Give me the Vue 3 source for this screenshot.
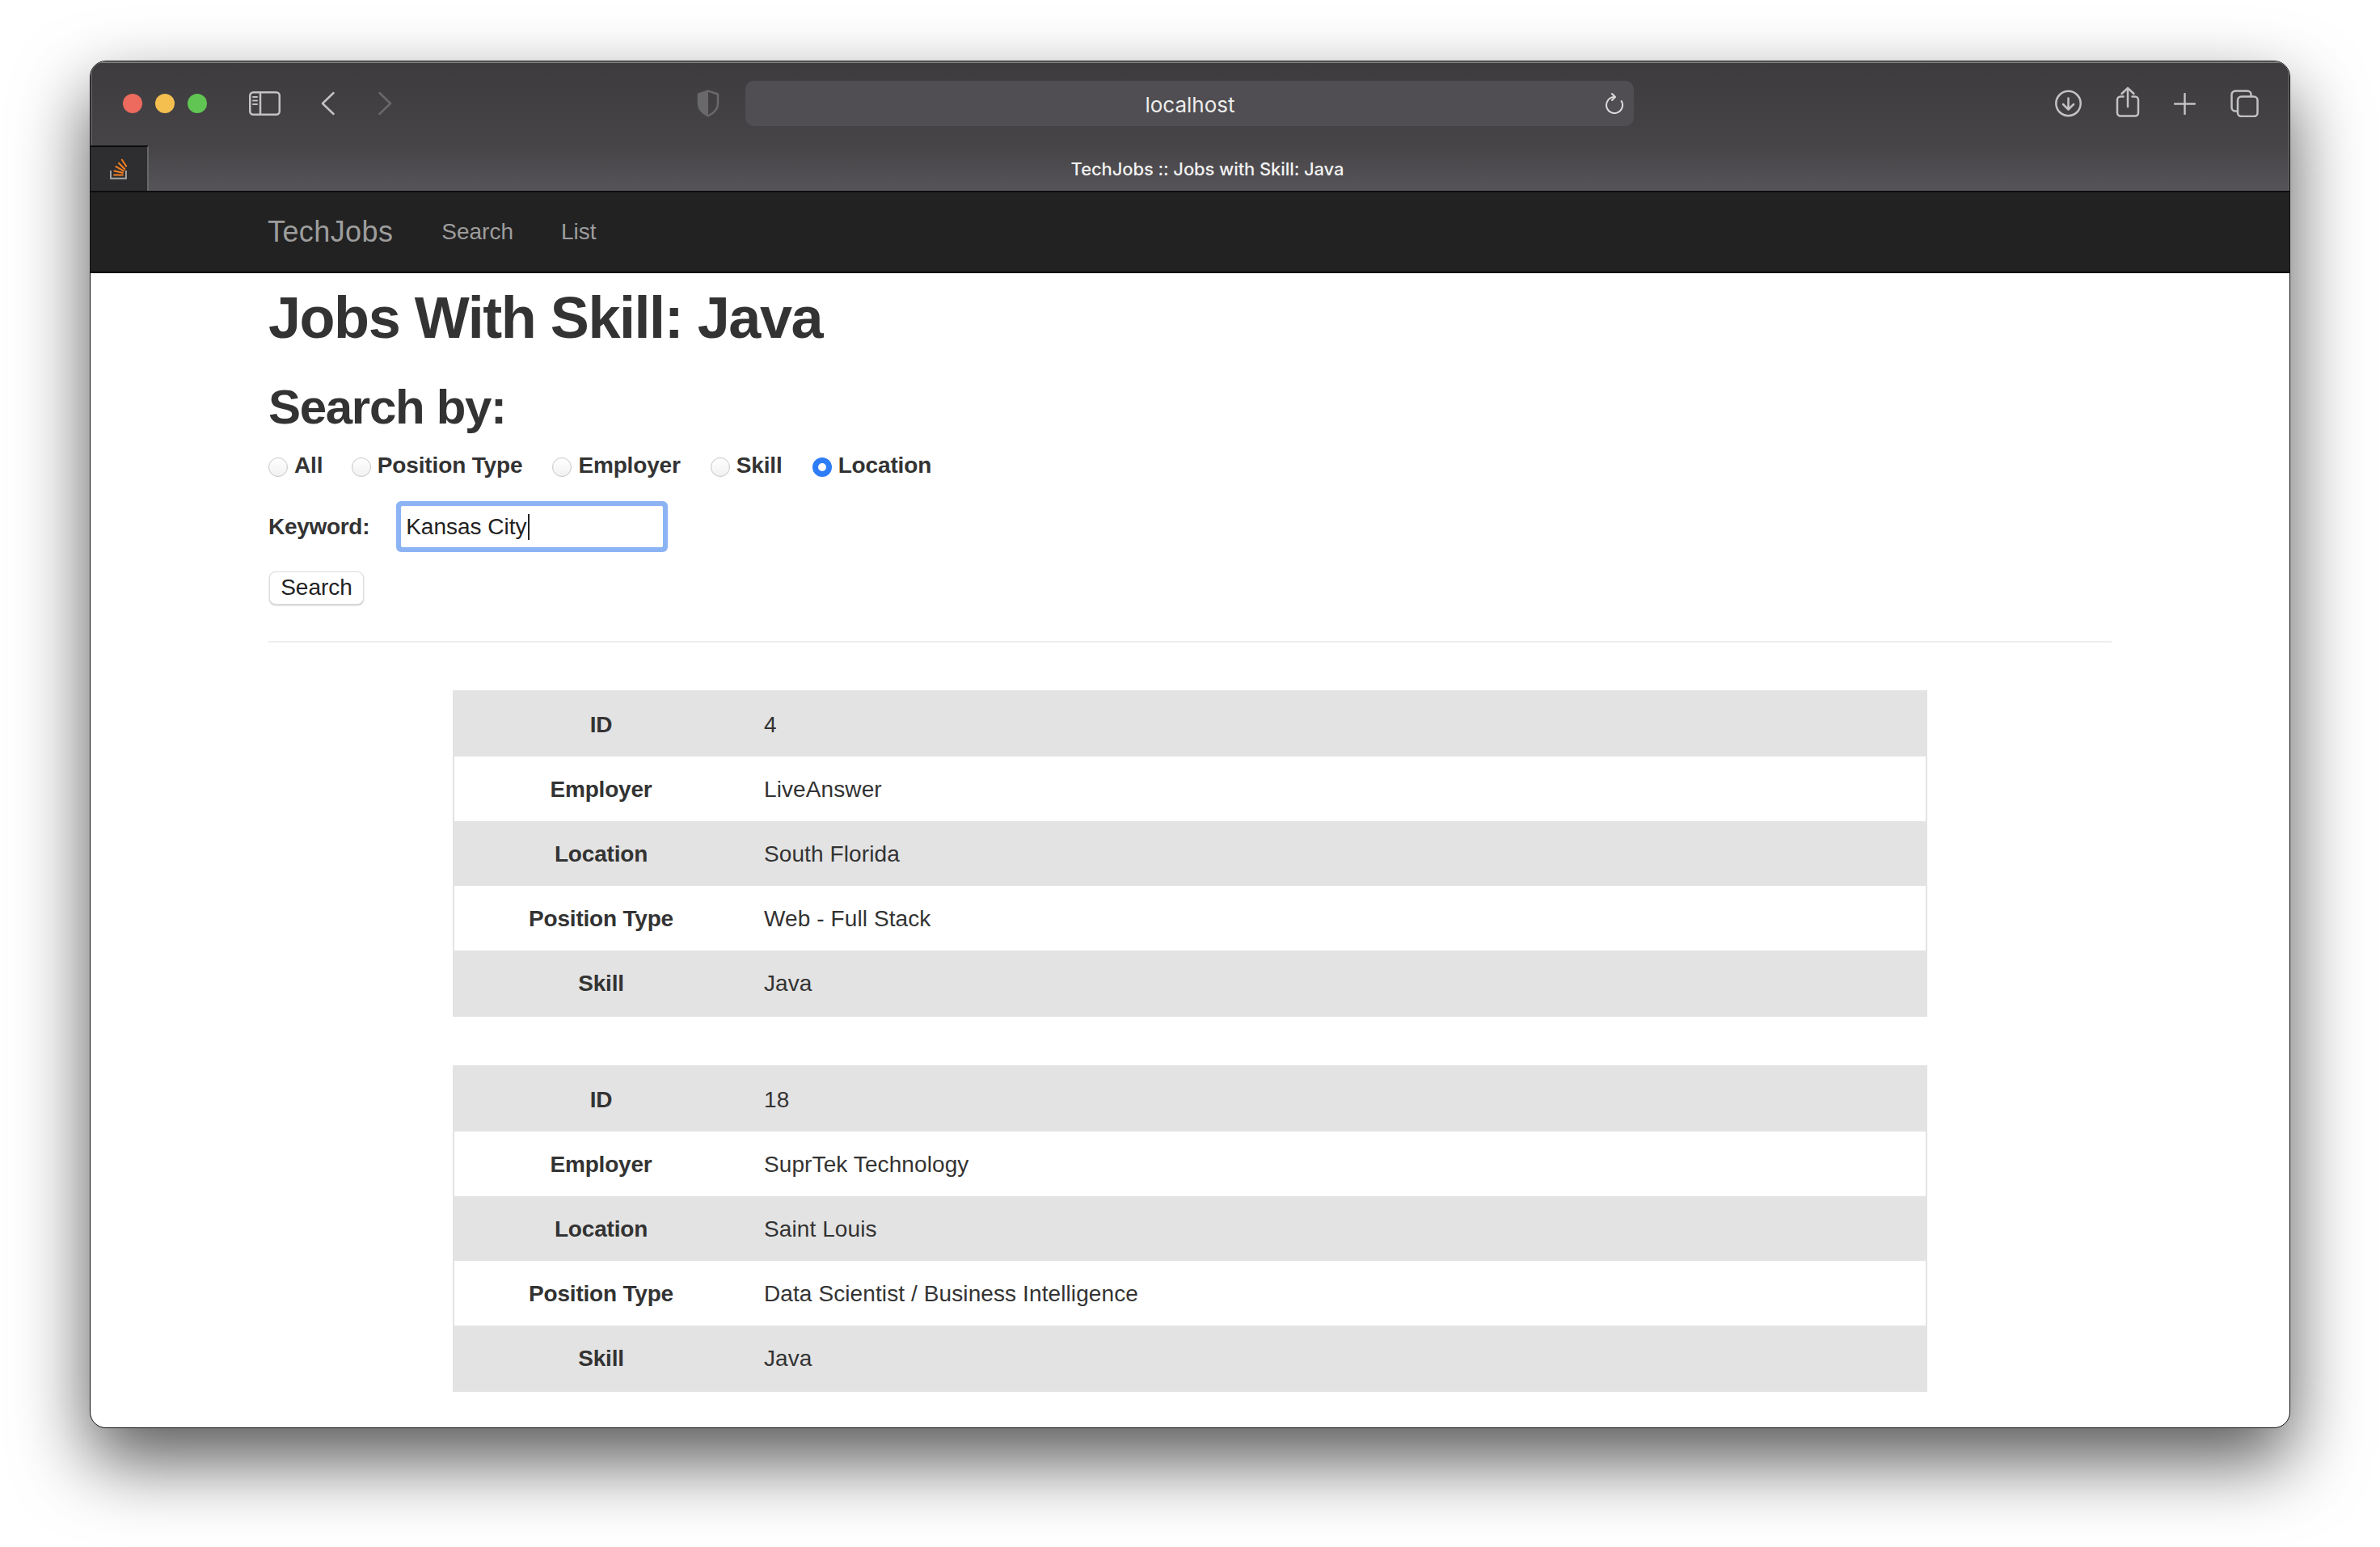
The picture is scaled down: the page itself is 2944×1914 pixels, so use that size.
<template>
  <div class="page">
    <div class="window">
      <header class="toolbar">
        <div class="lights">
          <span class="light red"></span>
          <span class="light yellow"></span>
          <span class="light green"></span>
        </div>
        <svg class="ico sidebar" width="39" height="30" viewBox="0 0 39 30" fill="none">
          <rect x="1.25" y="1.25" width="36.5" height="27.5" rx="4" />
          <path d="M14 1.5v27" />
          <path class="thin" d="M5 7h5M5 11.5h5M5 16h5" />
        </svg>
        <svg class="ico back" width="17" height="30" viewBox="0 0 17 30" fill="none">
          <path d="M15.5 2 2 15l13.5 13" />
        </svg>
        <svg class="ico forward" width="17" height="30" viewBox="0 0 17 30" fill="none">
          <path d="M1.5 2 15 15 1.5 28" />
        </svg>
        <svg class="shield" width="28" height="34" viewBox="0 0 28 34" fill="none">
          <path d="M14 1.5 2 5.5v12c0 6.5 5 11.500 12 15 7-3.500 12-8.500 12-15v-12z" stroke="#69686b" stroke-width="2.500" stroke-linejoin="round" />
          <path d="M14 1.500 2 5.500v12c0 6.500 5 11.500 12 15z" fill="#69686b" />
        </svg>
        <div class="urlbar">
          <span class="url-text">localhost</span>
          <svg class="reload" width="23" height="26" viewBox="0 0 23 26" fill="none">
            <path d="M11 5A10 10 0 1 0 19.700 10" />
            <path d="M8 1l4 4-4 4" />
          </svg>
        </div>
        <svg class="ico download" width="33" height="34" viewBox="0 0 33 34" fill="none">
          <circle cx="16.500" cy="17" r="15.200" />
          <path d="M16.500 10.500v13M10 18l6.500 6.500L23 18" />
        </svg>
        <svg class="ico share" width="30" height="38" viewBox="0 0 30 38" fill="none">
          <path d="M9.500 12.500H6a4 4 0 0 0-4 4v16a4 4 0 0 0 4 4h18a4 4 0 0 0 4-4v-16a4 4 0 0 0-4-4h-3.500" />
          <path d="M15 2v23M7.500 9 15 1.800 22.500 9" />
        </svg>
        <svg class="ico plus" width="27" height="27" viewBox="0 0 27 27" fill="none">
          <path d="M13.500 1v25M1 13.500h25" />
        </svg>
        <svg class="ico tabs-ico" width="35" height="34" viewBox="0 0 35 34" fill="none">
          <path d="M7.500 26.500H6a4.500 4.500 0 0 1-4.500-4.500V6A4.500 4.500 0 0 1 6 1.500h15A4.500 4.500 0 0 1 25.500 6v2" />
          <rect x="9" y="8.500" width="24.500" height="24.500" rx="4.500" />
        </svg>
      </header>

      <div class="tabstrip">
        <div class="tab">
          <svg width="22" height="26" viewBox="0 0 22 26" fill="none">
            <path d="M.9 15v9.800h19V15" stroke="#a7a7a7" stroke-width="2" />
            <g stroke="#f48024" stroke-width="2">
              <path d="M4.300 20.500h12.400" />
              <path d="M4.600 15.200 16.600 18" />
              <path d="m6.700 9.600 10.800 6.200" />
              <path d="m10.400 5.200 8.400 8.600" />
              <path d="m14.400 1 6.200 9.400" />
            </g>
          </svg>
        </div>
        <div class="page-title">TechJobs :: Jobs with Skill: Java</div>
      </div>

      <nav class="navbar">
        <a class="brand" href="#">TechJobs</a>
        <a class="nav-link" href="#">Search</a>
        <a class="nav-link" href="#">List</a>
      </nav>

      <main class="container">
        <h1>Jobs With Skill: Java</h1>
        <h2>Search by:</h2>

        <form @submit.prevent>
          <div class="radios">
            <label v-for="opt in options" :key="opt" class="radio">
              <input v-model="searchType" type="radio" name="searchType" :value="opt" />
              <span>{{ opt }}</span>
            </label>
          </div>
          <div class="keyword">
            <label for="searchTerm">Keyword:</label>
            <div class="input-wrap">
              <input id="searchTerm" v-model="term" type="text" />
              <span class="caret"></span>
            </div>
          </div>
          <button type="submit" class="search-btn">Search</button>
        </form>

        <hr />

        <table v-for="job in jobs" :key="job.id" class="job">
          <tbody>
            <tr v-for="row in rowsFor(job)" :key="row[0]">
              <th>{{ row[0] }}</th>
              <td>{{ row[1] }}</td>
            </tr>
          </tbody>
        </table>
      </main>
    </div>
  </div>
</template>

<script setup>
import { ref } from 'vue';

const options = ['All', 'Position Type', 'Employer', 'Skill', 'Location'];
const searchType = ref('Location');
const term = ref('Kansas City');

const jobs = [
  { id: 4, employer: 'LiveAnswer', location: 'South Florida', position: 'Web - Full Stack', skill: 'Java' },
  { id: 18, employer: 'SuprTek Technology', location: 'Saint Louis', position: 'Data Scientist / Business Intelligence', skill: 'Java' },
];

const rowsFor = (job) => [
  ['ID', job.id],
  ['Employer', job.employer],
  ['Location', job.location],
  ['Position Type', job.position],
  ['Skill', job.skill],
];
</script>

<style>
body {
  margin: 0;
  background: #fff;
}
</style>

<style scoped>
.page {
  height: 1914px;
  box-sizing: border-box;
  padding: 75px 111px 147px;
  overflow: hidden;
  display: flex;
  font-family: "Liberation Sans", Arial, sans-serif;
  font-size: 28px;
  line-height: 40px;
  color: #333;
}

.window {
  flex: 1;
  display: flex;
  flex-direction: column;
  border: 1px solid #111;
  border-radius: 20px;
  overflow: hidden;
  background: #fff;
  box-shadow: 0 40px 90px rgba(0, 0, 0, 0.66);
}

/* title bar */
.toolbar {
  height: 104px;
  flex: none;
  display: flex;
  align-items: center;
  padding-left: 40px;
  background: linear-gradient(#3d3b3e, #464447);
  box-shadow: inset 0 2px 0 #7d7c7e, inset 2px 0 0 #5a595b, inset -2px 0 0 #5a595b;
}

.lights {
  display: flex;
  gap: 16px;
}

.light {
  width: 24px;
  height: 24px;
  border-radius: 50%;
}
.red { background: #ec6a5e; }
.yellow { background: #f4bf4f; }
.green { background: #61c554; }

.ico {
  flex: none;
  stroke: #c2c1c3;
  stroke-width: 2.5;
  stroke-linecap: round;
  stroke-linejoin: round;
}
.ico .thin { stroke-width: 2; }

.sidebar { margin-left: 52px; }
.back { margin-left: 50px; }
.forward { margin-left: 54px; stroke: #69686b; }
.shield { margin-left: 377px; flex: none; }

.urlbar {
  width: 1099px;
  height: 56px;
  flex: none;
  margin-left: 32px;
  border-radius: 10px;
  background: #504e52;
  display: grid;
  grid-template-columns: 1fr auto 1fr;
  align-items: center;
}

.url-text {
  grid-column: 2;
  padding: 3px 0 0 1px;
  font-family: Inter, "Liberation Sans", sans-serif;
  font-size: 26px;
  color: #ececec;
}

.reload {
  grid-column: 3;
  justify-self: end;
  margin-right: 12px;
  stroke: #dcdcdc;
  stroke-width: 2;
  stroke-linecap: round;
  stroke-linejoin: round;
}

.download { margin-left: 521px; }
.share { margin-left: 42px; margin-top: -4px; }
.plus { margin-left: 42px; }
.tabs-ico { margin-left: 43px; }

/* tab strip */
.tabstrip {
  height: 56px;
  flex: none;
  display: flex;
  background: linear-gradient(#464447, #565458);
  box-shadow: inset -2px 0 0 #5a595b;
}

.tab {
  width: 70px;
  flex: none;
  display: flex;
  align-items: center;
  justify-content: center;
  box-sizing: content-box;
  background: #2e2d2f;
  border-top: 2px solid #0c0c0c;
  border-right: 2px solid #68676a;
}

.page-title {
  flex: 1;
  padding-right: 29px;
  text-align: center;
  font-family: Inter, "Liberation Sans", sans-serif;
  font-size: 22px;
  font-weight: 500;
  letter-spacing: -0.1px;
  line-height: 58px;
  color: #f2f2f2;
}

/* site nav */
.navbar {
  height: 98px;
  flex: none;
  display: flex;
  align-items: center;
  padding-left: 219px;
  background: #222;
  border-top: 2px solid #0c0c0c;
  border-bottom: 2px solid #080808;
}

.navbar a {
  color: #9d9d9d;
  text-decoration: none;
}

.brand {
  font-size: 36px;
  letter-spacing: 0.4px;
  margin-right: 60px;
}

.nav-link {
  margin-right: 59px;
}

/* page body */
.container {
  padding: 0 220px;
}

h1,
h2 {
  font-weight: 700;
  line-height: 1.1;
  margin: 0;
}

h1 {
  font-size: 72px;
  letter-spacing: -1.45px;
  margin-top: 16px;
}

h2 {
  font-size: 60px;
  letter-spacing: -1.3px;
  margin-top: 38px;
}

.radios {
  display: flex;
  gap: 37px;
  height: 40px;
  margin-top: 19px;
}

.radio {
  display: flex;
  align-items: center;
  gap: 8px;
  font-weight: 700;
  letter-spacing: -0.15px;
}

.radio:first-child {
  margin-right: -1.5px;
}

.radio input {
  appearance: none;
  width: 24px;
  height: 24px;
  margin: 4px 0 0;
  box-sizing: border-box;
  border-radius: 50%;
  border: 1px solid #c6c6c6;
  background: linear-gradient(#fff, #f1f1f1);
}

.radio input:checked {
  border: 7px solid #2f7df6;
  background: #fff;
}

.keyword {
  display: flex;
  align-items: center;
  margin-top: 30px;
  font-weight: 700;
}

.keyword label {
  letter-spacing: -0.3px;
}

.input-wrap {
  position: relative;
  margin-left: 39px;
  display: flex;
}

.input-wrap input {
  width: 324px;
  height: 51px;
  box-sizing: border-box;
  padding: 1px 6px 0;
  border: 0;
  border-radius: 2px;
  outline: none;
  box-shadow: 0 0 0 6px #8cb3f4;
  font: 28px "Liberation Sans", Arial, sans-serif;
  color: #222;
}

.caret {
  position: absolute;
  left: 157px;
  top: 10px;
  width: 2px;
  height: 32px;
  background: #222;
}

.search-btn {
  display: block;
  width: 117px;
  height: 41px;
  margin: 30px 0 0 1px;
  padding: 0 0 2px;
  border: 1px solid #dedede;
  border-radius: 8px;
  background: #fff;
  box-shadow: 0 1px 2px rgba(0, 0, 0, 0.25);
  font: 28px "Liberation Sans", Arial, sans-serif;
  color: #222;
}

hr {
  height: 2px;
  margin: 45px 0 59px;
  border: 0;
  background: #eee;
}

.job {
  width: 1824px;
  margin: 0 auto 60px;
  border-collapse: separate;
  border-spacing: 0;
  border: 2px solid #e3e3e3;
}

.job th,
.job td {
  height: 80px;
  box-sizing: border-box;
  padding: 2px 20px 0;
}

.job th {
  width: 363px;
  text-align: center;
  letter-spacing: -0.2px;
}

.job td {
  letter-spacing: 0.1px;
}

.job tr:nth-child(odd) {
  background: #e3e3e3;
}
</style>
